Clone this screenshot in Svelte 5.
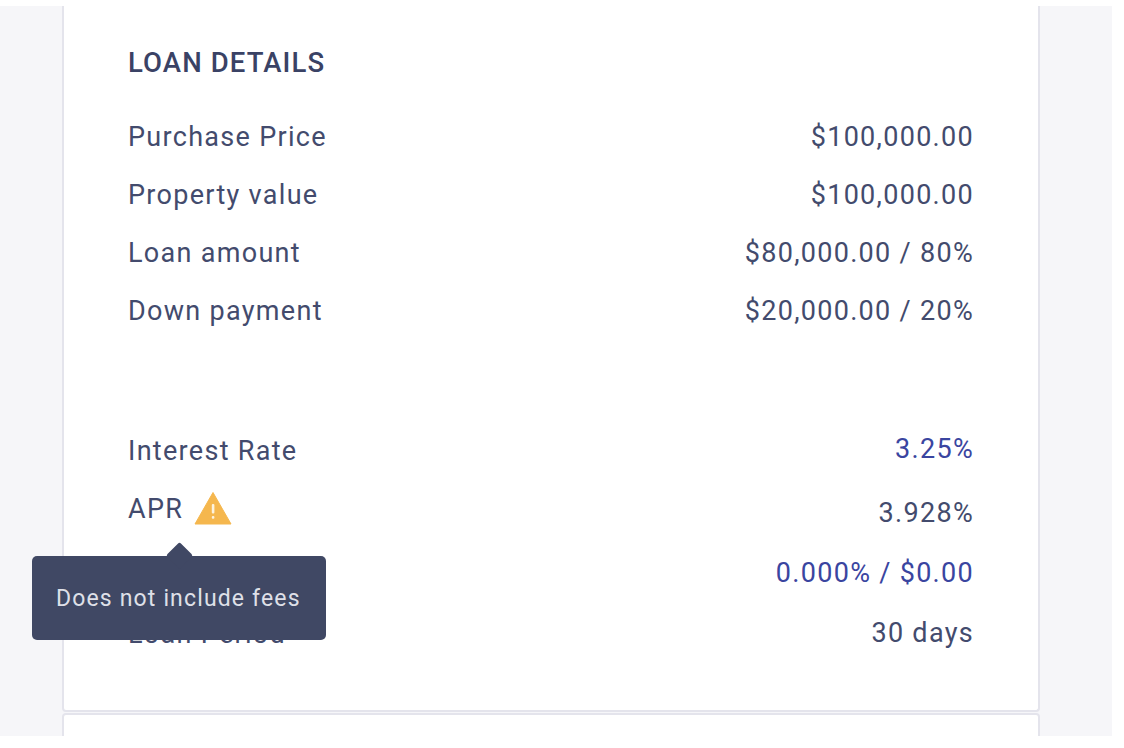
<script>
  const loan = [
    ['Purchase Price', '$100,000.00'],
    ['Property value', '$100,000.00'],
    ['Loan amount', '$80,000.00 / 80%'],
    ['Down payment', '$20,000.00 / 20%']
  ];
</script>

<div class="shot">
  <div class="page">
    <section class="card">
      <h2>LOAN DETAILS</h2>
      <div class="rows">
        {#each loan as [label, value]}
          <div class="row">
            <span>{label}</span>
            <span>{value}</span>
          </div>
        {/each}
      </div>

      <div class="rows rates">
        <div class="row">
          <span>Interest Rate</span>
          <span class="link rate">3.25%</span>
        </div>
        <div class="row apr">
          <span class="apr-label">
            APR
            <svg class="warn" width="38" height="34" viewBox="0 0 38 34">
              <path d="M19 1.5 L37 33 L1 33 Z" fill="#f5b74e" stroke="#f5b74e" stroke-width="1" stroke-linejoin="round" />
              <rect x="17.8" y="13" width="2.6" height="9.5" rx="1" fill="#fdf3df" />
              <rect x="17.8" y="25" width="2.6" height="2.8" rx="1" fill="#fdf3df" />
            </svg>
          </span>
          <span class="apr-value">3.928%</span>
        </div>
        <div class="row points">
          <span>Points</span>
          <span class="link">0.000% / $0.00</span>
        </div>
        <div class="row period">
          <span class="period-label">Loan Period</span>
          <span>30 days</span>
        </div>
      </div>

      <div class="tooltip">Does not include fees</div>
    </section>
    <section class="card next"></section>
  </div>
</div>

<style>
  :global(body) {
    background: #fff;
  }

  .shot {
    height: 748px;
    padding-top: 6px;
    box-sizing: border-box;
    overflow: hidden;
    font-family: Roboto, "Liberation Sans", sans-serif;
    color: #434b6d;
  }

  .page {
    width: 1112px;
    height: 730px;
    box-sizing: border-box;
    padding: 0 72px 0 62px;
    background: #f6f6f9;
    overflow: hidden;
    display: flex;
    flex-direction: column;
    gap: 1px;
  }

  .card {
    position: relative;
    flex: none;
    box-sizing: border-box;
    height: 706px;
    padding: 39px 64px 0 64px;
    background: #fff;
    border: 2px solid #e4e4ec;
    border-top: none;
    border-radius: 0 0 4px 4px;
  }

  .next {
    height: 60px;
    border-top: 2px solid #e4e4ec;
    border-radius: 4px 4px 0 0;
    padding: 0;
  }

  h2 {
    margin: 0 0 38px;
    height: 36px;
    font-size: 27.5px;
    line-height: 36px;
    font-weight: 500;
    letter-spacing: 1.1px;
    color: #3a4265;
  }

  .rows {
    display: flex;
    flex-direction: column;
    gap: 22px;
  }

  .rates {
    margin-top: 104px;
  }

  .row {
    display: flex;
    justify-content: space-between;
    align-items: flex-start;
    height: 36px;
    font-size: 27px;
    line-height: 36px;
    letter-spacing: 1.3px;
  }

  .link {
    color: #3a45a0;
  }

  .rate {
    margin-top: -2px;
  }

  .apr-label {
    display: flex;
    align-items: center;
    gap: 11px;
  }

  .warn {
    margin-top: -3px;
  }

  .apr-value {
    margin-top: 4px;
  }

  .points {
    margin-top: 6px;
  }

  .period {
    margin-top: 2px;
  }

  .period-label {
    margin-top: 1px;
  }

  .tooltip {
    position: absolute;
    left: -32px;
    top: 550px;
    width: 294px;
    height: 84px;
    box-sizing: border-box;
    padding: 0 24px;
    display: flex;
    align-items: center;
    background: #404864;
    border-radius: 5px;
    color: #dfe0e8;
    font-size: 23px;
    letter-spacing: 1.15px;
    white-space: nowrap;
  }

  .tooltip::before {
    content: "";
    position: absolute;
    left: 138px;
    top: -10px;
    width: 19px;
    height: 19px;
    background: #404864;
    transform: rotate(45deg);
    border-radius: 2px;
  }
</style>
